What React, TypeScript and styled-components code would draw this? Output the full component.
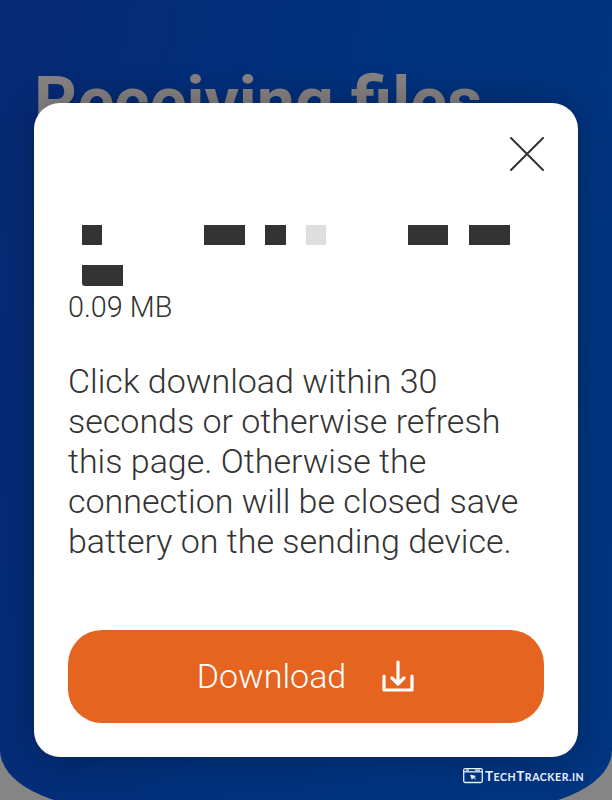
import React from "react";
import styled, { createGlobalStyle } from "styled-components";

const Global = createGlobalStyle`
  * { box-sizing: border-box; }
  body { margin: 0; background: #858585; overflow: hidden; font-family: Roboto, sans-serif; }
`;
const Page = styled.main`
  height: 800px;
  position: relative;
  overflow: hidden;
`;
const Panel = styled.section`
  height: 808px;
  border-radius: 0 0 110px 110px / 0 0 58px 58px;
  background: linear-gradient(100deg, #072974, #00317c 50%, #003580);
  padding: 68px 34px;
`;
const Title = styled.h1`
  margin: 0;
  font-size: 68px;
  line-height: 68px;
  font-weight: 700;
  color: #858281;
  white-space: nowrap;
`;
const Dialog = styled.section`
  position: absolute;
  left: 34px;
  top: 103px;
  width: 544px;
  height: 654px;
  border-radius: 26px;
  background: #fff;
  box-shadow: 0 0 34px rgba(0, 0, 0, 0.28);
  padding: 34px;
  display: flex;
  flex-direction: column;
  color: #333;
`;
const Close = styled.button`
  align-self: flex-end;
  width: 34px;
  height: 34px;
  padding: 0;
  border: 0;
  background: none;
  svg { display: block; }
`;
const Redacted = styled.div`
  margin: 53.5px 0 0 14px;
  display: grid;
  grid-template-columns: repeat(21, 20.37px);
  grid-template-rows: 20.5px 20.5px;
  row-gap: 20px;
  height: 65px;
`;
const Block = styled.span<{ $col: number; $span?: number; $row?: number; $light?: boolean }>`
  grid-column: ${(p) => p.$col} / span ${(p) => p.$span ?? 1};
  grid-row: ${(p) => p.$row ?? 1};
  background: ${(p) => (p.$light ? "#dedede" : "#333")};
  border-bottom-left-radius: ${(p) => (p.$row === 2 ? 3 : 0)}px;
`;
const Size = styled.div`
  font-weight: 300;
  font-size: 28.8px;
  line-height: 34px;
`;
const Body = styled.p`
  margin: 37.5px 0 69px;
  font-weight: 300;
  font-size: 34px;
  line-height: 40px;
  white-space: pre-line;
`;
const Download = styled.button`
  height: 93px;
  border: 0;
  border-radius: 34px;
  background: #e46420;
  color: #fff;
  font: 300 34px/40px Roboto, sans-serif;
  display: flex;
  align-items: center;
  justify-content: center;
  gap: 36px;
  padding: 0 1px 1px 0;
`;
const Brand = styled.footer`
  position: absolute;
  left: 463px;
  top: 767px;
  display: flex;
  align-items: center;
  gap: 2px;
  color: #e8efff;
  font: 700 10.6px/18px Lato, sans-serif;
  letter-spacing: 0.5px;
  white-space: nowrap;
  svg { margin-top: -1px; }
`;
const Initial = styled.span`
  font-size: 13.5px;
`;

export default function App() {
  return (
    <>
      <Global />
      <Page>
        <Panel><Title>Receiving files</Title></Panel>
        <Dialog>
          <Close aria-label="Close">
            <svg width="34" height="34" viewBox="0 0 34 34" fill="none" stroke="#333" strokeWidth="2" strokeLinecap="round">
              <path d="M1 1L33 33M33 1L1 33" />
            </svg>
          </Close>
          <Redacted>
            <Block $col={1} />
            <Block $col={7} $span={2} />
            <Block $col={10} />
            <Block $col={12} $light />
            <Block $col={17} $span={2} />
            <Block $col={20} $span={2} />
            <Block $col={1} $span={2} $row={2} />
          </Redacted>
          <Size>0.09 MB</Size>
          <Body>{"Click download within 30\nseconds or otherwise refresh\nthis page. Otherwise the\nconnection will be closed save\nbattery on the sending device."}</Body>
          <Download>
            Download
            <svg width="32" height="32" viewBox="0 0 32 32" fill="none" stroke="#fff" strokeWidth="3.2" strokeLinecap="round" strokeLinejoin="round">
              <path d="M2 16V30H30V16M16 2V23M10 18L16 24L22 18" />
            </svg>
          </Download>
        </Dialog>
        <Brand>
          <svg width="20" height="16" viewBox="0 0 20 16" fill="none" stroke="currentColor" strokeWidth="1.3">
            <rect x=".7" y=".7" width="18.6" height="13.8" rx="1.5" />
            <path d="M1 3.8H19" />
            <path d="M3 2.2H6M12 2.2H17" />
            <path fill="currentColor" d="M7.5 7L12.5 8.2L10.8 9.2L12.5 11.2L10.3 9.7L9 11.3Z" strokeWidth=".7" />
          </svg>
          <span><Initial>T</Initial>ECH<Initial>T</Initial>RACKER.IN</span>
        </Brand>
      </Page>
    </>
  );
}
